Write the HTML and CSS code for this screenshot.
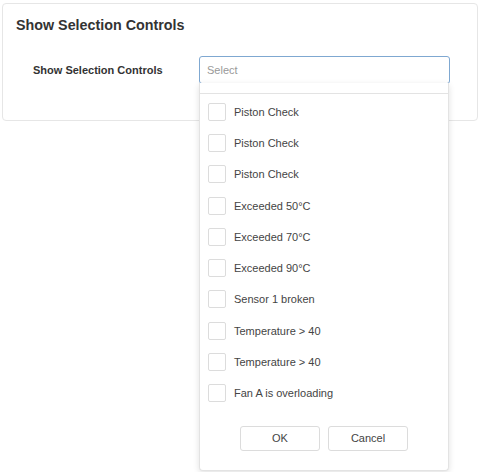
FILE: index.html
```html
<!DOCTYPE html>
<html>
<head>
<meta charset="utf-8">
<link rel="stylesheet" href="styles.css">
</head>
<body>
<div class="card">
  <h2 class="title">Show Selection Controls</h2>
  <div class="form-row">
    <label class="label">Show Selection Controls</label>
    <div class="select-wrap">
      <div class="select-input">Select</div>
      <div class="dropdown">
        <div class="dd-head"></div>
        <ul class="dd-list">
          <li class="dd-item"><span class="cb"></span><span class="txt">Piston Check</span></li>
          <li class="dd-item"><span class="cb"></span><span class="txt">Piston Check</span></li>
          <li class="dd-item"><span class="cb"></span><span class="txt">Piston Check</span></li>
          <li class="dd-item"><span class="cb"></span><span class="txt">Exceeded 50°C</span></li>
          <li class="dd-item"><span class="cb"></span><span class="txt">Exceeded 70°C</span></li>
          <li class="dd-item"><span class="cb"></span><span class="txt">Exceeded 90°C</span></li>
          <li class="dd-item"><span class="cb"></span><span class="txt">Sensor 1 broken</span></li>
          <li class="dd-item"><span class="cb"></span><span class="txt">Temperature &gt; 40</span></li>
          <li class="dd-item"><span class="cb"></span><span class="txt">Temperature &gt; 40</span></li>
          <li class="dd-item"><span class="cb"></span><span class="txt">Fan A is overloading</span></li>
        </ul>
        <div class="dd-buttons">
          <button class="btn">OK</button>
          <button class="btn">Cancel</button>
        </div>
      </div>
    </div>
  </div>
</div>
</body>
</html>
```
FILE: styles.css
```css
* { box-sizing: border-box; }
html, body { margin: 0; padding: 0; background: #fff; }
html { height: 100%; }
body {
  min-height: 472px;
  font-family: "Liberation Sans", Arial, sans-serif;
  color: #333;
  padding: 3px 0 0 2px;
}
.card {
  width: 476px;
  height: 118px;
  border: 1px solid #e6e6e6;
  border-radius: 4px;
  padding: 13px 0 0 13px;
  overflow: visible;
}
.title {
  margin: 0;
  font-size: 14.3px;
  font-weight: bold;
  color: #333;
  line-height: 17px;
}
.form-row {
  display: flex;
  align-items: center;
  margin-top: 22px;
}
.label {
  width: 183px;
  padding-left: 17px;
  font-size: 11px;
  font-weight: bold;
  color: #333;
}
.select-wrap {
  position: relative;
  width: 251px;
}
.select-input {
  height: 28px;
  border: 1px solid #7fa8d1;
  border-radius: 3px;
  padding: 0 7px;
  font-size: 11px;
  line-height: 26px;
  color: #999;
}
.dropdown {
  position: absolute;
  left: 0;
  top: 27px;
  width: 250px;
  height: 388px;
  background: #fff;
  border: 1px solid #e3e3e3;
  border-top: none;
  border-radius: 0 0 4px 4px;
  box-shadow: 0 2px 6px rgba(0,0,0,0.12);
  z-index: 2;
}
.dd-head {
  height: 11px;
  border-bottom: 1px solid #e3e3e3;
}
.dd-list {
  list-style: none;
  margin: 0;
  padding: 2px 0 0 0;
}
.dd-item {
  display: flex;
  align-items: center;
  height: 31.3px;
  padding-left: 8px;
}
.cb {
  width: 18px;
  height: 18px;
  border: 1px solid #dcdcdc;
  border-radius: 2px;
  background: #fff;
  flex: none;
}
.txt {
  margin-left: 8px;
  font-size: 11px;
  color: #444;
}
.dd-buttons {
  display: flex;
  justify-content: center;
  gap: 8px;
  margin-top: 17px;
}
.btn {
  width: 80px;
  height: 25px;
  background: #fff;
  border: 1px solid #dcdcdc;
  border-radius: 3px;
  font-family: "Liberation Sans", Arial, sans-serif;
  font-size: 11px;
  color: #444;
  padding: 0;
}
```
